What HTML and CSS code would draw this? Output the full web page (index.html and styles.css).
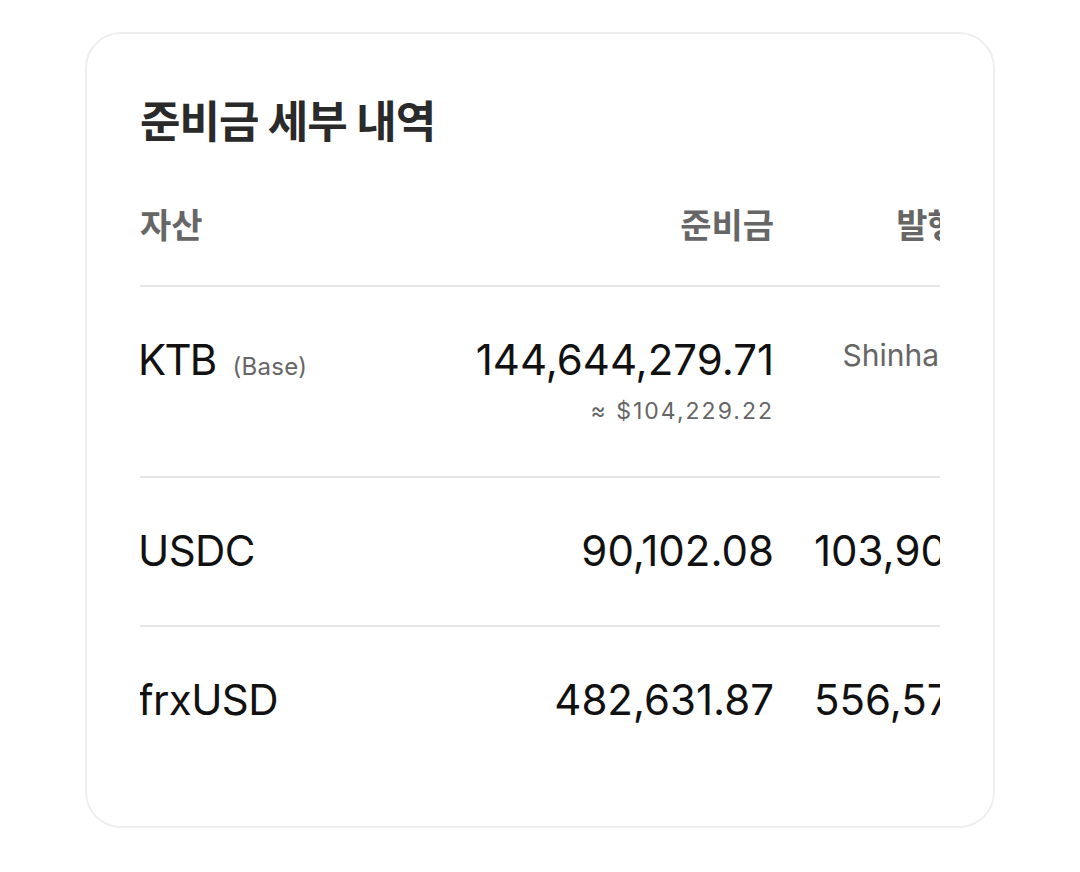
FILE: index.html
```html
<!DOCTYPE html>
<html lang="ko">
<head>
<meta charset="utf-8">
<link rel="stylesheet" href="styles.css">
</head>
<body>
<section class="card">
  <h2 class="title">준비금 세부 내역</h2>
  <div class="table-wrap">
    <table class="reserve-table">
      <thead>
        <tr>
          <th class="col-asset">자산</th>
          <th class="col-reserve">준비금</th>
          <th class="col-issue">발행 수량</th>
        </tr>
      </thead>
      <tbody>
        <tr class="row-tall">
          <td class="col-asset"><span class="asset asset-tight">KTB</span><span class="tag">(Base)</span></td>
          <td class="col-reserve">
            <div class="amount">144,644,279.71</div>
            <div class="approx">≈ $104,229.22</div>
          </td>
          <td class="col-issue"><span class="issuer">Shinhan Bank</span></td>
        </tr>
        <tr>
          <td class="col-asset"><span class="asset">USDC</span></td>
          <td class="col-reserve"><div class="amount">90,102.08</div></td>
          <td class="col-issue"><div class="amount">103,903.47</div></td>
        </tr>
        <tr>
          <td class="col-asset"><span class="asset">frxUSD</span></td>
          <td class="col-reserve"><div class="amount">482,631.87</div></td>
          <td class="col-issue"><div class="amount">556,571.20</div></td>
        </tr>
      </tbody>
    </table>
  </div>
</section>
</body>
</html>
```

FILE: styles.css
```css
html, body {
  margin: 0;
  padding: 0;
  background: #ffffff;
}

body {
  font-family: Inter, "Noto Sans CJK KR", sans-serif;
  color: #111111;
}

.card {
  box-sizing: border-box;
  width: 910px;
  margin: 32px auto 0;
  padding: 58px 53px 52px 52px;
  border: 2px solid #efefef;
  border-radius: 36px;
  background: #ffffff;
}

.title {
  margin: 0 0 0 1px;
  font-size: 44px;
  line-height: 60px;
  font-weight: 700;
  color: #2a2a2a;
  letter-spacing: -1px;
}

.table-wrap {
  margin-top: 46px;
  margin-left: 1px;
  overflow: hidden;
}

.reserve-table {
  border-collapse: collapse;
  table-layout: fixed;
  width: 890px;
  white-space: nowrap;
}

.reserve-table th {
  font-size: 34px;
  font-weight: 600;
  color: #666666;
  line-height: 44px;
  padding: 6px 0 37px;
  border-bottom: 2px solid #e6e6e6;
}

.reserve-table td {
  padding: 48px 0 49px;
  vertical-align: top;
  border-bottom: 2px solid #e6e6e6;
}

.reserve-table tbody tr:last-child td {
  border-bottom: none;
}

.row-tall td {
  padding-bottom: 50px;
}

.col-asset {
  text-align: left;
  width: 300px;
}

.col-asset .asset {
  margin-left: -2px;
}

.col-reserve {
  text-align: right;
  width: 334px;
}

.reserve-table .col-issue {
  text-align: right;
  padding-left: 40px;
  width: 216px;
}

.asset {
  font-size: 42px;
  line-height: 50px;
  letter-spacing: -0.6px;
}

.asset-tight {
  letter-spacing: -1.8px;
}

.tag {
  margin-left: 17px;
  font-size: 24px;
  color: #666666;
  letter-spacing: 0.3px;
}

.amount {
  font-size: 42px;
  line-height: 50px;
  letter-spacing: 0;
}

.approx {
  margin-top: 11px;
  font-size: 23px;
  line-height: 30px;
  color: #666666;
  letter-spacing: 2px;
}

.issuer {
  display: inline-block;
  margin-right: -6px;
  font-size: 30px;
  line-height: 40px;
  color: #666666;
}
```
